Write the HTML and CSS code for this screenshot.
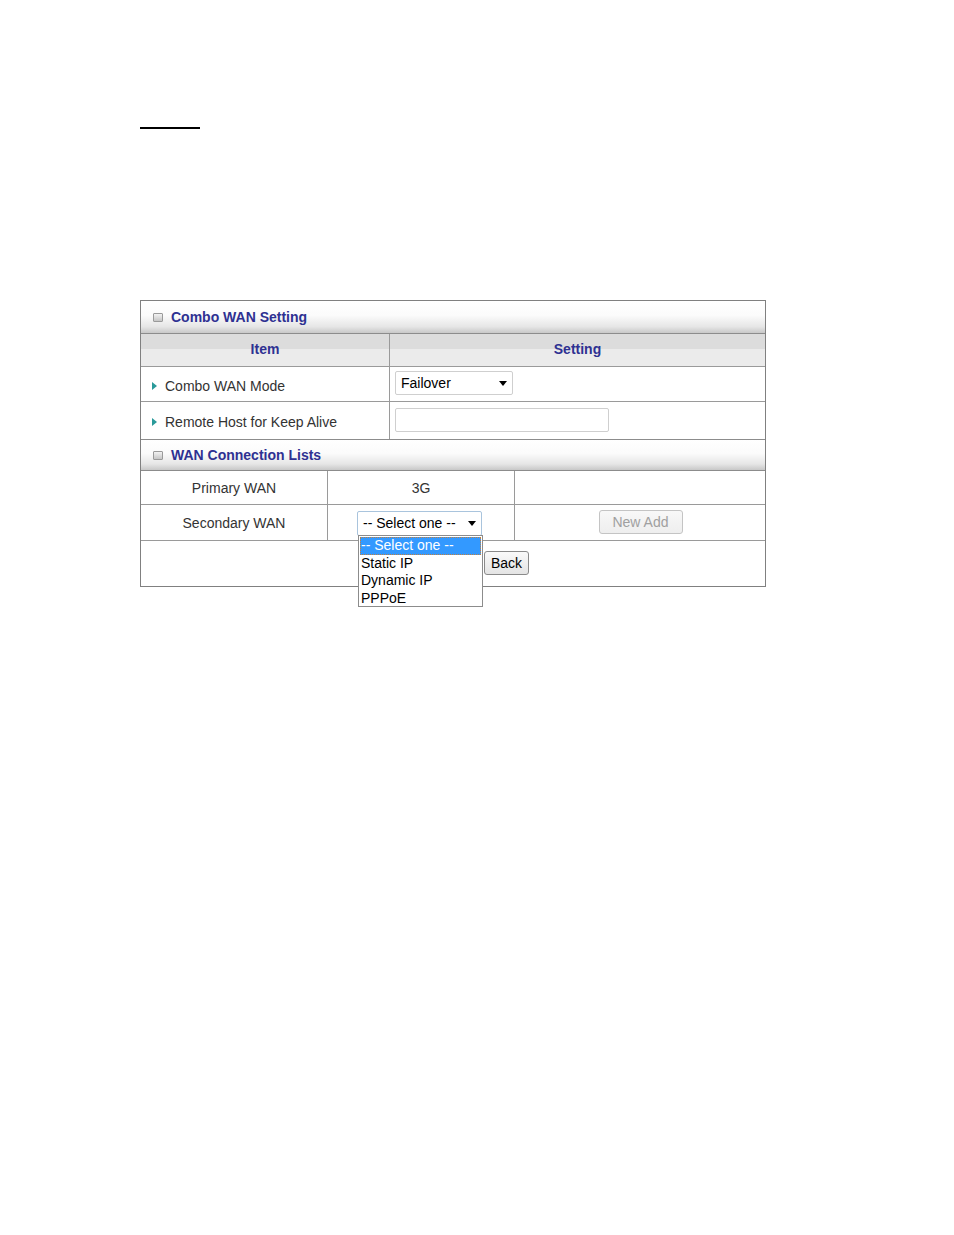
FILE: index.html
```html
<!DOCTYPE html>
<html>
<head>
<meta charset="utf-8">
<link rel="stylesheet" href="styles.css">
</head>
<body>
<div class="page">
  <div class="rule"></div>
  <div class="panel">
    <div class="sec-head"><span class="sq"></span><span class="sec-title">Combo WAN Setting</span></div>
    <div class="row colhead">
      <div class="cell c1 center">Item</div>
      <div class="cell c2 center">Setting</div>
    </div>
    <div class="row r1">
      <div class="cell c1"><span class="tri"></span>Combo WAN Mode</div>
      <div class="cell c2">
        <div class="sel sel-fail"><span>Failover</span><span class="caret"></span></div>
      </div>
    </div>
    <div class="row r2">
      <div class="cell c1"><span class="tri"></span>Remote Host for Keep Alive</div>
      <div class="cell c2"><div class="txt"></div></div>
    </div>
    <div class="sec-head sec2"><span class="sq"></span><span class="sec-title">WAN Connection Lists</span></div>
    <div class="row3 r3">
      <div class="cell center">Primary WAN</div>
      <div class="cell center">3G</div>
      <div class="cell"></div>
    </div>
    <div class="row3 r4">
      <div class="cell center">Secondary WAN</div>
      <div class="cell sel-cell">
        <div class="sel sel-one"><span>-- Select one --</span><span class="caret"></span></div>
      </div>
      <div class="cell center"><div class="btn btn-dis">New Add</div></div>
    </div>
    <div class="foot">
      <div class="btn btn-back">Back</div>
    </div>
    <div class="dropdown">
      <div class="opt hl">-- Select one --</div>
      <div class="opt">Static IP</div>
      <div class="opt">Dynamic IP</div>
      <div class="opt">PPPoE</div>
    </div>
  </div>
</div>
</body>
</html>
```
FILE: styles.css
```css
* { box-sizing: border-box; }
html, body { margin: 0; padding: 0; background: #fff; }
body { font-family: Arial, "Liberation Sans", sans-serif; font-size: 14px; color: #333; }
.page { padding: 127px 0 0 140px; width: 954px; height: 1235px; }
.rule { width: 60px; height: 2px; background: #000; }
.panel {
  position: relative;
  margin-top: 171px;
  width: 626px;
  border: 1px solid #808080;
}
.sec-head {
  height: 33px;
  display: flex;
  align-items: center;
  padding-left: 12px;
  background: linear-gradient(#ffffff 0%, #fbfbfb 45%, #e6e6e6 80%, #c8c8c8 100%);
  border-bottom: 1px solid #8c8c8c;
}
.sec2 { height: 32px; border-top: 1px solid #8c8c8c; }
.sq {
  width: 10px; height: 9px;
  border: 1px solid #9a9a9a;
  border-radius: 1px;
  background: linear-gradient(#f2f2f2, #c6c6c6);
  margin-right: 8px;
  margin-top: 1px;
}
.sec-title { font-weight: bold; color: #2e3192; font-size: 14px; }
.row { display: flex; border-bottom: 1px solid #9a9a9a; }
.colhead {
  height: 33px;
  background: linear-gradient(#dcdcdc 0%, #dcdcdc 48%, #ebebeb 48%, #ebebeb 100%);
  font-weight: bold;
  color: #2e3192;
}
.colhead .cell { padding-bottom: 2px; }
.r1 { height: 35px; }
.r1 .c1 { padding-top: 3px; }
.r2 { height: 37px; border-bottom: none; }
.r2 .c1 { padding-top: 2px; }
.cell { display: flex; align-items: center; }
.c1 { width: 249px; border-right: 1px solid #9a9a9a; padding-left: 11px; }
.c2 { flex: 1; padding-left: 5px; }
.center { justify-content: center; padding-left: 0; }
.tri {
  width: 0; height: 0;
  border-top: 4px solid transparent;
  border-bottom: 4px solid transparent;
  border-left: 5px solid #2a9a9a;
  margin-right: 8px;
}
.sel {
  display: flex;
  align-items: center;
  justify-content: space-between;
  height: 24px;
  border: 1px solid #cfcfcf;
  border-radius: 2px;
  background: #fff;
  color: #000;
  font-size: 14px;
}
.sel-fail { width: 118px; padding: 0 5px 0 5px; margin-top: -2px; }
.sel-cell { padding-left: 29px; }
.sel-one { width: 125px; padding: 0 5px 0 5px; border-color: #a9c4dd; margin-top: 1px; height: 25px; }
.caret {
  width: 0; height: 0;
  border-left: 4px solid transparent;
  border-right: 4px solid transparent;
  border-top: 5px solid #000;
}
.txt {
  width: 214px; height: 24px;
  border: 1px solid #cfcfcf;
  border-radius: 2px;
  margin-top: -1px;
}
.row3 { display: grid; grid-template-columns: 187px 187px 1fr; border-bottom: 1px solid #9a9a9a; }
.row3 .cell:nth-child(1), .row3 .cell:nth-child(2) { border-right: 1px solid #9a9a9a; }
.r3 { height: 34px; }
.r4 { height: 36px; }
.btn {
  display: flex; align-items: center; justify-content: center;
  border: 1px solid #a6a6a6;
  border-radius: 3px;
  background: linear-gradient(#fafafa, #e4e4e4);
  font-size: 14px;
}
.btn-dis { width: 84px; height: 24px; color: #a0a0a0; border-color: #c4c4c4; background: linear-gradient(#f8f8f8, #eeeeee); margin-left: 1px; margin-top: -1px; }
.foot { height: 45px; display: flex; align-items: center; padding-left: 343px; }
.btn-back { width: 45px; height: 24px; color: #000; border-color: #8a8a8a; margin-top: -1px; }
.dropdown {
  position: absolute;
  left: 217px;
  top: 234px;
  width: 125px;
  height: 72px;
  border: 1px solid #8c8c8c;
  background: #fff;
  padding: 1px 1px;
}
.opt { height: 17.5px; line-height: 17px; padding-left: 1px; color: #000; font-size: 14px; }
.opt.hl { background: #3399ff; color: #fff; outline: 1px dotted #c08040; outline-offset: -1px; }
```
